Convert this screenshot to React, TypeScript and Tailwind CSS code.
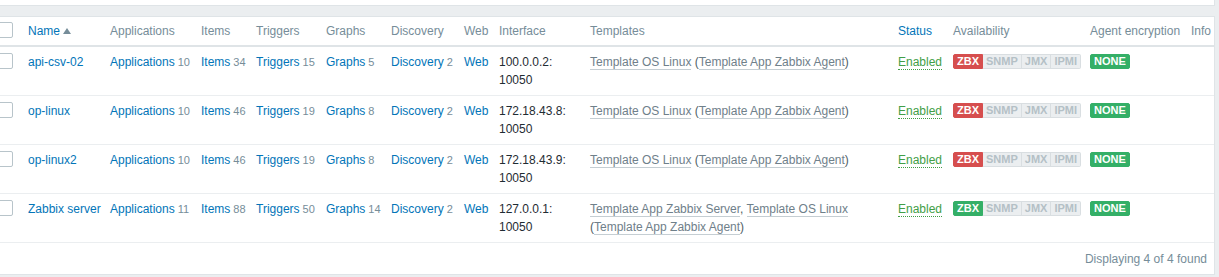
import React from "react"

type Row = {
  name: string
  apps: number
  items: number
  triggers: number
  graphs: number
  discovery: number
  ip: string
  templates: React.ReactNode
  zbx: "red" | "green"
}

const Count = ({ n }: { n: number }) => <span className="text-[11px] text-[#768d99] ml-[3px]">{n}</span>

const Tpl = ({ children }: { children: React.ReactNode }) => (
  <span className="text-[#6f808a] border-b border-[#c5ced3]">{children}</span>
)

const rows: Row[] = [
  {
    name: "api-csv-02", apps: 10, items: 34, triggers: 15, graphs: 5, discovery: 2, ip: "100.0.0.2:",
    templates: <><Tpl>Template OS Linux</Tpl> <span className="text-[#4f5d65]">(</span><Tpl>Template App Zabbix Agent</Tpl><span className="text-[#4f5d65]">)</span></>,
    zbx: "red",
  },
  {
    name: "op-linux", apps: 10, items: 46, triggers: 19, graphs: 8, discovery: 2, ip: "172.18.43.8:",
    templates: <><Tpl>Template OS Linux</Tpl> <span className="text-[#4f5d65]">(</span><Tpl>Template App Zabbix Agent</Tpl><span className="text-[#4f5d65]">)</span></>,
    zbx: "red",
  },
  {
    name: "op-linux2", apps: 10, items: 46, triggers: 19, graphs: 8, discovery: 2, ip: "172.18.43.9:",
    templates: <><Tpl>Template OS Linux</Tpl> <span className="text-[#4f5d65]">(</span><Tpl>Template App Zabbix Agent</Tpl><span className="text-[#4f5d65]">)</span></>,
    zbx: "red",
  },
  {
    name: "Zabbix server", apps: 11, items: 88, triggers: 50, graphs: 14, discovery: 2, ip: "127.0.0.1:",
    templates: <><Tpl>Template App Zabbix Server</Tpl><span className="text-[#4f5d65]">,</span> <Tpl>Template OS Linux</Tpl> <span className="text-[#4f5d65]">(</span><Tpl>Template App Zabbix Agent</Tpl><span className="text-[#4f5d65]">)</span></>,
    zbx: "green",
  },
]

const Checkbox = () => (
  <div className="w-[16px] h-[16px] ml-[-3px] bg-white border border-[#b8c4ca] rounded-[2px]" />
)

const widths = [23, 82, 91, 55, 70, 65, 73, 35, 91, 308, 55, 137, 101, 28]

export default function App() {
  const th = "text-left font-normal text-[#768d99] px-[5px] pt-[5px] pb-[5px] border-b-2 border-[#dfe4e7] whitespace-nowrap align-top"
  const td = "px-[5px] pt-[6px] pb-[6px] align-top"
  const link = "text-[#0275b8]"

  return (
    <div className="min-h-[277px] bg-[#ebeef0] text-[12px] leading-[18px] text-[#1f2c33]" style={{ fontFamily: '"Liberation Sans", Arial, sans-serif' }}>
      <div className="w-[1215px] h-[6px] bg-white border-b border-r border-[#dfe4e7]" />
      <div className="h-[10px]" />
      <div className="w-[1215px] bg-white border-t border-r border-b border-[#dfe4e7]">
        <table className="table-fixed border-collapse w-[1214px]">
          <colgroup>
            {widths.map((w, i) => (
              <col key={i} style={{ width: w }} />
            ))}
          </colgroup>
          <thead>
            <tr>
              <th className="pl-0 pt-[5px] pb-[5px] border-b-2 border-[#dfe4e7] align-top"><Checkbox /></th>
              <th className={th}>
                <span className={link}>Name</span>
                <svg className="inline-block ml-[3px] mb-[2px]" width="8" height="6" viewBox="0 0 8 6"><path d="M0 6 L4 0 L8 6 Z" fill="#768d99" /></svg>
              </th>
              <th className={th}>Applications</th>
              <th className={th}>Items</th>
              <th className={th}>Triggers</th>
              <th className={th}>Graphs</th>
              <th className={th}>Discovery</th>
              <th className={th}>Web</th>
              <th className={th}>Interface</th>
              <th className={th}>Templates</th>
              <th className={th}><span className={link}>Status</span></th>
              <th className={th}>Availability</th>
              <th className={th}>Agent encryption</th>
              <th className={th}>Info</th>
            </tr>
          </thead>
          <tbody>
            {rows.map((r) => (
              <tr key={r.name} className="border-b border-[#ebeef0]">
                <td className="pl-0 pt-[6px] pb-[6px] align-top"><Checkbox /></td>
                <td className={`${td} whitespace-nowrap`}><span className={link}>{r.name}</span></td>
                <td className={`${td} whitespace-nowrap`}><span className={link}>Applications</span><Count n={r.apps} /></td>
                <td className={`${td} whitespace-nowrap`}><span className={link}>Items</span><Count n={r.items} /></td>
                <td className={`${td} whitespace-nowrap`}><span className={link}>Triggers</span><Count n={r.triggers} /></td>
                <td className={`${td} whitespace-nowrap`}><span className={link}>Graphs</span><Count n={r.graphs} /></td>
                <td className={`${td} whitespace-nowrap`}><span className={link}>Discovery</span><Count n={r.discovery} /></td>
                <td className={td}><span className={link}>Web</span></td>
                <td className={td}>{r.ip}<br />10050</td>
                <td className={td}>{r.templates}</td>
                <td className={td}><span className="text-[#429e47] border-b border-dotted border-[#429e47]">Enabled</span></td>
                <td className={td}>
                  <div className="flex mt-[1px] text-[11px] leading-[13px] font-bold">
                    <span className={`px-[3px] border rounded-l-[2px] text-white ${r.zbx === "red" ? "bg-[#d64e4e] border-[#d64e4e]" : "bg-[#34af67] border-[#34af67]"}`}>ZBX</span>
                    <span className="px-[3px] border-y border-r border-[#d9dee1] bg-[#ebeef0] text-[#b4c0c6]">SNMP</span>
                    <span className="px-[3px] border-y border-r border-[#d9dee1] bg-[#ebeef0] text-[#b4c0c6]">JMX</span>
                    <span className="px-[3px] border-y border-r border-[#d9dee1] bg-[#ebeef0] text-[#b4c0c6] rounded-r-[2px]">IPMI</span>
                  </div>
                </td>
                <td className={td}>
                  <div className="flex mt-[1px] text-[11px] leading-[13px] font-bold">
                    <span className="px-[3px] border border-[#34af67] bg-[#34af67] text-white rounded-[2px]">NONE</span>
                  </div>
                </td>
                <td className={td}></td>
              </tr>
            ))}
          </tbody>
        </table>
        <div className="flex justify-end pr-[7px] pt-[7px] pb-[6px] text-[#768d99]">Displaying 4 of 4 found</div>
      </div>
    </div>
  )
}
